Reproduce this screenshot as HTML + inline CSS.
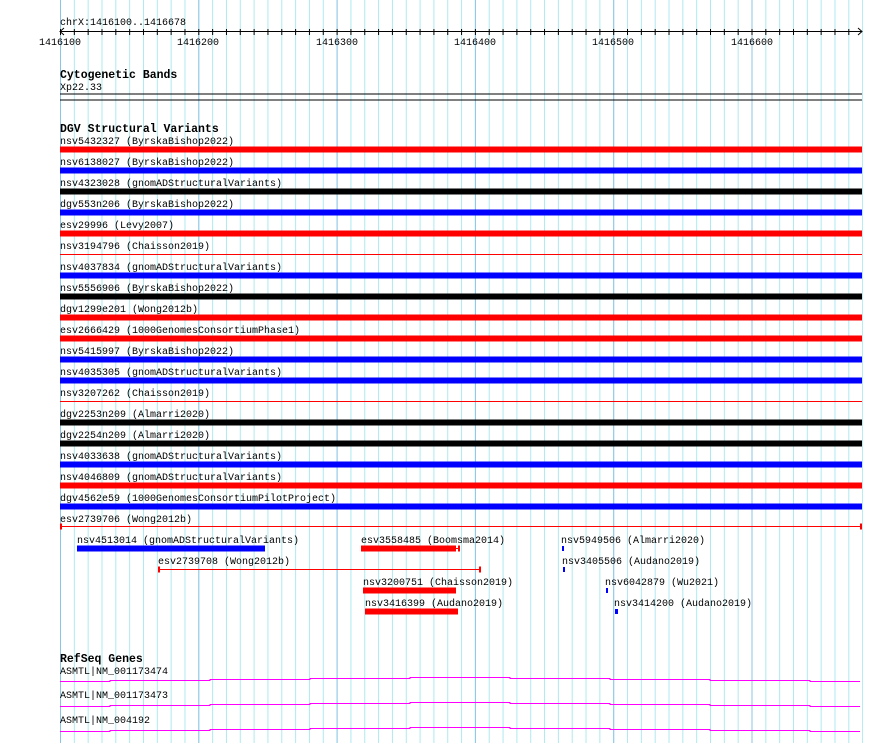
<!DOCTYPE html>
<html><head><meta charset="utf-8"><style>
html,body{margin:0;padding:0;background:#fff;width:890px;height:743px;overflow:hidden}
svg{display:block}
text{font-family:"Liberation Mono",monospace;font-size:10px;fill:#000}
.b{font-weight:bold;font-size:11.5px}
</style></head><body>
<svg width="890" height="743" viewBox="0 0 890 743" xmlns="http://www.w3.org/2000/svg">
<defs>
<pattern id="minor" x="60" y="0" width="13.83" height="743" patternUnits="userSpaceOnUse"><rect x="0" y="0" width="1" height="743" fill="#aee9ef"/></pattern>
<pattern id="major" x="60" y="0" width="138.3" height="743" patternUnits="userSpaceOnUse"><rect x="0" y="0" width="1" height="743" fill="#8cc4e6"/></pattern>
<pattern id="tick" x="60" y="0" width="13.83" height="743" patternUnits="userSpaceOnUse"><rect x="0" y="29" width="1" height="6" fill="#000"/></pattern>
</defs>
<rect x="60" y="0" width="803" height="743" fill="url(#minor)"/>
<rect x="60" y="0" width="803" height="743" fill="url(#major)"/>
<!-- ruler -->
<text x="60" y="25">chrX:1416100..1416678</text>
<rect x="60" y="31" width="802" height="1" fill="#000"/>
<rect x="60" y="0" width="800" height="743" fill="url(#tick)"/>
<path d="M64,28 L60,31.5 L64,35 M858,28 L862,31.5 L858,35" stroke="#000" fill="none"/>
<text x="60" y="45" text-anchor="middle">1416100</text>
<text x="198" y="45" text-anchor="middle">1416200</text>
<text x="337" y="45" text-anchor="middle">1416300</text>
<text x="475" y="45" text-anchor="middle">1416400</text>
<text x="613" y="45" text-anchor="middle">1416500</text>
<text x="752" y="45" text-anchor="middle">1416600</text>
<!-- cytobands -->
<text class="b" x="60" y="78">Cytogenetic Bands</text>
<text x="60" y="90">Xp22.33</text>
<rect x="60" y="93.5" width="802" height="1" fill="#000"/>
<rect x="60" y="99.5" width="802" height="1" fill="#000"/>
<!-- DGV -->
<text class="b" x="60" y="132">DGV Structural Variants</text>
<g>
<text x="60" y="144">nsv5432327 (ByrskaBishop2022)</text><rect x="60" y="146.5" width="802" height="6" fill="#f00"/>
<text x="60" y="165">nsv6138027 (ByrskaBishop2022)</text><rect x="60" y="167.5" width="802" height="6" fill="#00f"/>
<text x="60" y="186">nsv4323028 (gnomADStructuralVariants)</text><rect x="60" y="188.5" width="802" height="6" fill="#000"/>
<text x="60" y="207">dgv553n206 (ByrskaBishop2022)</text><rect x="60" y="209.5" width="802" height="6" fill="#00f"/>
<text x="60" y="228">esv29996 (Levy2007)</text><rect x="60" y="230.5" width="802" height="6" fill="#f00"/>
<text x="60" y="249">nsv3194796 (Chaisson2019)</text><rect x="60" y="254" width="802" height="1" fill="#f00"/>
<text x="60" y="270">nsv4037834 (gnomADStructuralVariants)</text><rect x="60" y="272.5" width="802" height="6" fill="#00f"/>
<text x="60" y="291">nsv5556906 (ByrskaBishop2022)</text><rect x="60" y="293.5" width="802" height="6" fill="#000"/>
<text x="60" y="312">dgv1299e201 (Wong2012b)</text><rect x="60" y="314.5" width="802" height="6" fill="#f00"/>
<text x="60" y="333">esv2666429 (1000GenomesConsortiumPhase1)</text><rect x="60" y="335.5" width="802" height="6" fill="#f00"/>
<text x="60" y="354">nsv5415997 (ByrskaBishop2022)</text><rect x="60" y="356.5" width="802" height="6" fill="#00f"/>
<text x="60" y="375">nsv4035305 (gnomADStructuralVariants)</text><rect x="60" y="377.5" width="802" height="6" fill="#00f"/>
<text x="60" y="396">nsv3207262 (Chaisson2019)</text><rect x="60" y="401" width="802" height="1" fill="#f00"/>
<text x="60" y="417">dgv2253n209 (Almarri2020)</text><rect x="60" y="419.5" width="802" height="6" fill="#000"/>
<text x="60" y="438">dgv2254n209 (Almarri2020)</text><rect x="60" y="440.5" width="802" height="6" fill="#000"/>
<text x="60" y="459">nsv4033638 (gnomADStructuralVariants)</text><rect x="60" y="461.5" width="802" height="6" fill="#00f"/>
<text x="60" y="480">nsv4046809 (gnomADStructuralVariants)</text><rect x="60" y="482.5" width="802" height="6" fill="#f00"/>
<text x="60" y="501">dgv4562e59 (1000GenomesConsortiumPilotProject)</text><rect x="60" y="503.5" width="802" height="6" fill="#00f"/>
<text x="60" y="522">esv2739706 (Wong2012b)</text><rect x="60" y="526" width="802" height="1" fill="#f00"/>
<rect x="60" y="523.5" width="2" height="6" fill="#f00"/><rect x="860" y="523.5" width="2" height="6" fill="#f00"/>
</g>
<!-- lower features -->
<text x="77" y="543">nsv4513014 (gnomADStructuralVariants)</text><rect x="77" y="545.5" width="188" height="6" fill="#00f"/>
<text x="158" y="564">esv2739708 (Wong2012b)</text><rect x="158" y="569" width="323" height="1" fill="#f00"/>
<rect x="158" y="566.5" width="2" height="6" fill="#f00"/><rect x="479" y="566.5" width="2" height="6" fill="#f00"/>
<text x="361" y="543">esv3558485 (Boomsma2014)</text><rect x="361" y="545.5" width="95" height="6" fill="#f00"/>
<rect x="456" y="548" width="3" height="1" fill="#f00"/><rect x="458" y="545.5" width="2" height="6" fill="#f00"/>
<text x="363" y="585">nsv3200751 (Chaisson2019)</text><rect x="363" y="587.5" width="93" height="6" fill="#f00"/>
<text x="365" y="606">nsv3416399 (Audano2019)</text><rect x="365" y="608.5" width="93" height="6" fill="#f00"/>
<text x="561" y="543">nsv5949506 (Almarri2020)</text><rect x="562" y="546" width="2" height="5" fill="#00f"/>
<text x="562" y="564">nsv3405506 (Audano2019)</text><rect x="563" y="567" width="2" height="5" fill="#00f"/>
<text x="605" y="585">nsv6042879 (Wu2021)</text><rect x="606" y="588" width="2" height="5" fill="#00f"/>
<text x="614" y="606">nsv3414200 (Audano2019)</text><rect x="615" y="609" width="3" height="5" fill="#00f"/>
<!-- RefSeq -->
<text class="b" x="60" y="662">RefSeq Genes</text>
<text x="60" y="674">ASMTL|NM_001173474</text>
<text x="60" y="698">ASMTL|NM_001173473</text>
<text x="60" y="723">ASMTL|NM_004192</text>
<g fill="none" stroke="#f0f" stroke-width="1">
<path d="M60,681.5H110V680.5H210V679.5H310V678.5H410V677.5H510V678.5H610V679.5H710V680.5H810V681.5H860"/>
<path d="M60,706.5H110V705.5H210V704.5H310V703.5H410V702.5H510V703.5H610V704.5H710V705.5H810V706.5H860"/>
<path d="M60,731.5H110V730.5H210V729.5H310V728.5H410V727.5H510V728.5H610V729.5H710V730.5H810V731.5H860"/>
</g>
</svg>
</body></html>
